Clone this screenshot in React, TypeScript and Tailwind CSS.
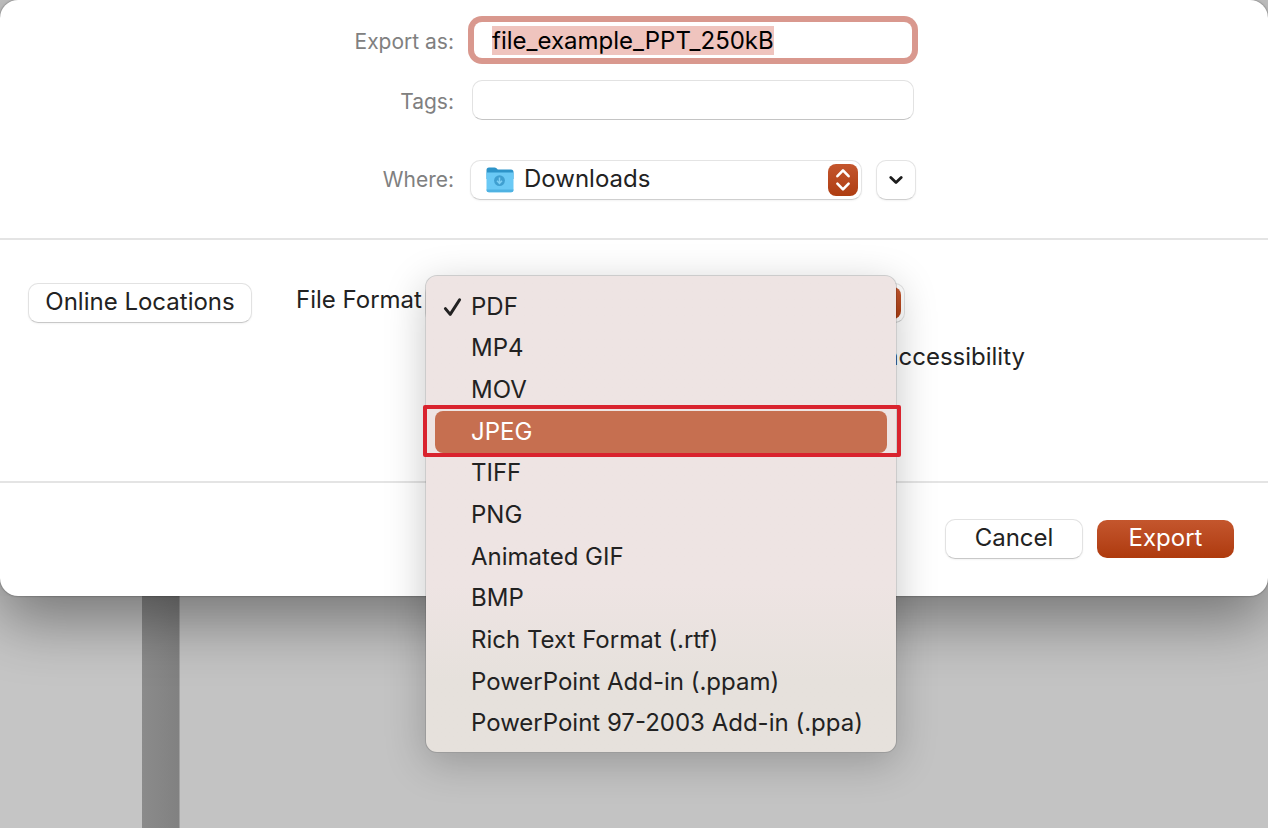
import { useEffect, useRef, useState } from 'react'

const formats = [
  'PDF',
  'MP4',
  'MOV',
  'JPEG',
  'TIFF',
  'PNG',
  'Animated GIF',
  'BMP',
  'Rich Text Format (.rtf)',
  'PowerPoint Add-in (.ppam)',
  'PowerPoint 97-2003 Add-in (.ppa)',
]

function FolderIcon() {
  return (
    <svg viewBox="0 0 28 26" className="h-[26px] w-7" aria-hidden="true">
      <path d="M0.5 3Q0.5 0.5 3 0.5H8.5Q9.7 0.5 10.5 1.3L11.8 2.4H25Q27.5 2.4 27.5 5V12H0.5Z" fill="#2d94c9" />
      <path d="M0.5 5.6H27.5V23Q27.5 25.3 25.2 25.3H2.8Q0.5 25.3 0.5 23Z" fill="#6ac9f5" />
      <path d="M0.5 22.6H27.5V23Q27.5 25.3 25.2 25.3H2.8Q0.5 25.3 0.5 23Z" fill="#4fb2e2" />
      <circle cx="13.5" cy="13.6" r="5.4" fill="#3f9fd0" />
      <path d="M13.5 10.4V16.2M11 13.8L13.5 16.4L16 13.8" fill="none" stroke="#7fd0f5" strokeWidth="1.5" />
    </svg>
  )
}

function Stepper() {
  return (
    <span className="pointer-events-none absolute top-1 right-1 flex h-8 w-[30px] items-center justify-center rounded-lg bg-linear-to-b from-[#c4562d] to-[#ae3d10]">
      <svg viewBox="0 0 30 32" className="h-8 w-[30px]" fill="none" stroke="#fff" strokeWidth="2.6" strokeLinecap="round" strokeLinejoin="round" aria-hidden="true">
        <path d="M9.4 12.2L15 6.4L20.6 12.2" />
        <path d="M9.4 19.6L15 25.4L20.6 19.6" />
      </svg>
    </span>
  )
}

interface FormatMenuProps {
  selected: string
  active: string
  onSelect: (format: string) => void
}

function FormatMenu({ selected, active, onSelect }: FormatMenuProps) {
  return (
    <ul
      role="menu"
      className="absolute -top-2 left-0 z-10 grid h-[478px] w-[472px] auto-rows-fr rounded-xl border border-black/20 bg-linear-to-b from-[#eee4e3] from-65% to-[#e6e1dc] to-85% bg-clip-padding px-[9px] pt-[10px] pb-2 shadow-[0_10px_40px_rgba(0,0,0,0.22)]"
    >
      {formats.map((format) => (
        <li key={format} role="none" className="relative">
          <button
            type="button"
            role="menuitemradio"
            aria-checked={format === selected}
            onClick={() => onSelect(format)}
            className={
              format === active
                ? 'flex h-full w-full items-center rounded-lg bg-[#c66f50] text-left text-white'
                : 'flex h-full w-full items-center rounded-lg text-left'
            }
          >
            <span className="flex w-9 justify-center">
              {format === selected && (
                <svg viewBox="0 0 20 20" className="h-5 w-5" fill="none" stroke="currentColor" strokeWidth="3" strokeLinecap="round" strokeLinejoin="round" aria-hidden="true">
                  <path d="M2.4 11.6L7.2 17.4L16.6 2.8" />
                </svg>
              )}
            </span>
            <span className="whitespace-nowrap">{format}</span>
          </button>
          {format === active && (
            <span className="pointer-events-none absolute -top-1.5 -right-3.5 -bottom-1 -left-3 rounded-xs border-4 border-[#d9232e]" />
          )}
        </li>
      ))}
    </ul>
  )
}

export default function App() {
  const [format, setFormat] = useState('PDF')
  const nameRef = useRef<HTMLInputElement>(null)

  useEffect(() => {
    nameRef.current?.focus()
    nameRef.current?.select()
  }, [])

  return (
    <div className="flex min-h-screen flex-col bg-[#c3c3c3] font-['Inter','Liberation_Sans',sans-serif] text-2xl text-[#222]">
      <form
        onSubmit={(e) => e.preventDefault()}
        className="relative z-10 rounded-[18px] bg-white shadow-[0_0_2px_rgba(0,0,0,0.5),0_24px_60px_rgba(0,0,0,0.4)]"
      >
        <section className="grid grid-cols-[100px_446px] items-center justify-center gap-x-4 border-b-2 border-[#e4e4e4] pt-4 pb-[38px] pl-0.5">
          <label htmlFor="name" className="pt-1 text-right text-[21px] whitespace-nowrap text-[#808080]">
            Export as:
          </label>
          <div className="flex h-12 items-center px-1">
            <input
              id="name"
              ref={nameRef}
              defaultValue="file_example_PPT_250kB"
              className="h-9 w-full rounded-lg bg-white px-[18px] text-black ring-6 ring-[#d9988e] outline-none selection:bg-[#efc4be] selection:text-black"
            />
          </div>

          <label htmlFor="tags" className="mt-4 pt-1 text-right text-[21px] text-[#808080]">
            Tags:
          </label>
          <div className="mt-4 px-0.5">
            <input
              id="tags"
              className="block h-10 w-full rounded-[10px] border border-[#e2e2e2] border-b-[#c4c4c4] bg-white px-4 outline-none"
            />
          </div>

          <label htmlFor="where" className="mt-10 text-right text-[21px] text-[#808080]">
            Where:
          </label>
          <div className="mt-10 flex gap-3.5">
            <div className="relative flex-1">
              <select
                id="where"
                className="h-10 w-full appearance-none rounded-[10px] border border-[#e4e4e4] border-b-[#cfcfcf] bg-white pb-0.5 pl-[53px] shadow-xs outline-none"
              >
                <option>Downloads</option>
              </select>
              <span className="pointer-events-none absolute top-[7px] left-4">
                <FolderIcon />
              </span>
              <Stepper />
            </div>
            <button
              type="button"
              aria-label="Show more"
              className="flex h-10 w-10 items-center justify-center rounded-[10px] border border-[#e4e4e4] border-b-[#cfcfcf] bg-white shadow-xs"
            >
              <svg viewBox="0 0 14 10" className="h-[10px] w-3.5" fill="none" stroke="#1c1c1c" strokeWidth="2.8" strokeLinecap="round" strokeLinejoin="round" aria-hidden="true">
                <path d="M1.8 2.4L7 7.4L12.2 2.4" />
              </svg>
            </button>
          </div>
        </section>

        <section className="flex items-start border-b-2 border-[#e4e4e4] px-7 pt-[43px] pb-[108px]">
          <button
            type="button"
            className="h-10 w-56 rounded-[10px] border border-[#e2e2e2] border-b-[#c8c8c8] bg-white pb-0.5 whitespace-nowrap shadow-xs"
          >
            Online Locations
          </button>
          <label htmlFor="format" className="ml-11 w-[129px] pt-px whitespace-nowrap">
            File Format
          </label>
          <div className="relative w-[480px]">
            <select
              id="format"
              value={format}
              onChange={(e) => setFormat(e.target.value)}
              className="block h-10 w-full appearance-none rounded-[10px] border border-[#e4e4e4] border-b-[#cfcfcf] bg-white pl-12 outline-none"
            >
              {formats.map((f) => (
                <option key={f}>{f}</option>
              ))}
            </select>
            <Stepper />
            <p className="mt-[18px] ml-[460px] whitespace-nowrap">accessibility</p>
            <FormatMenu selected={format} active="JPEG" onSelect={setFormat} />
          </div>
        </section>

        <footer className="flex items-center justify-end gap-3.5 px-[34px] pt-9 pb-[37px]">
          <button
            type="button"
            className="h-10 w-[138px] rounded-[10px] border border-[#e2e2e2] border-b-[#c8c8c8] bg-white pb-0.5 shadow-xs"
          >
            Cancel
          </button>
          <button
            type="submit"
            className="h-[38px] w-[137px] rounded-[10px] bg-linear-to-b from-[#c4562d] to-[#ae3a0c] pb-0.5 text-white"
          >
            Export
          </button>
        </footer>
      </form>

      {/* document window behind the sheet */}
      <div className="flex flex-1">
        <div className="w-[142px] bg-[#c5c5c5]" />
        <div className="w-[38px] border-r border-[#a0a0a0] bg-linear-to-r from-[#8b8b8b] to-[#818181]" />
        <div className="flex-1 bg-[#c3c3c3]" />
      </div>
    </div>
  )
}
